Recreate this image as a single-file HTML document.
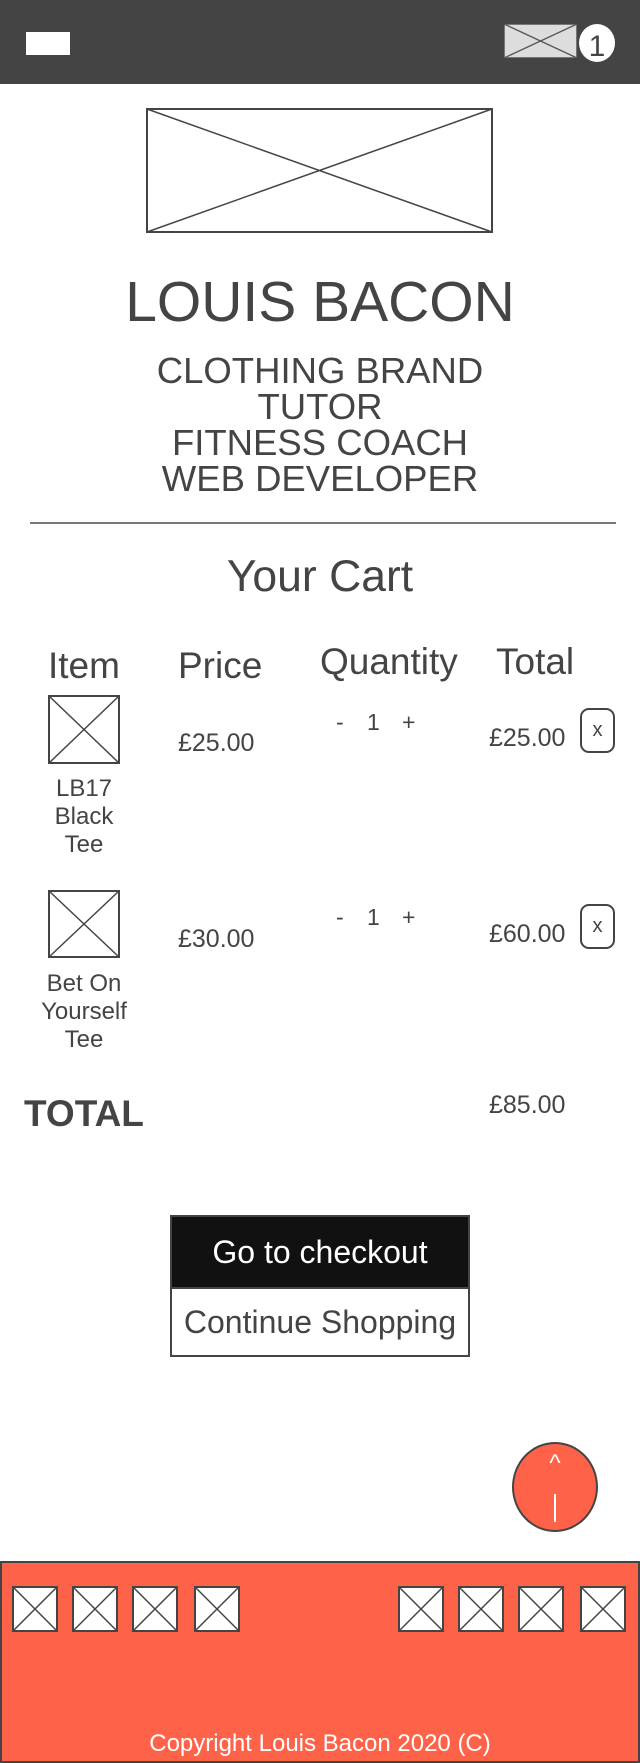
<!DOCTYPE html>
<html><head><meta charset="utf-8"><style>
*{margin:0;padding:0;box-sizing:border-box}
body{width:640px;height:1762px;position:relative;background:#fff;font-family:"Liberation Sans",sans-serif;color:#444;overflow:hidden}
.a{position:absolute;line-height:1;white-space:nowrap}
.c{text-align:center}
svg{position:absolute;display:block}
.btn{position:absolute;display:flex;align-items:center;justify-content:center;font-size:32px}
</style></head><body>
<div style="position:absolute;left:0;top:0;width:640px;height:84px;background:#444"></div>
<div style="position:absolute;left:26px;top:32px;width:44px;height:23px;background:#fff"></div>
<svg style="left:504px;top:24px" width="73" height="34"><rect x="0.5" y="0.5" width="72" height="33" fill="#ddd" stroke="#777"/><path d="M0 0L73 34M73 0L0 34" stroke="#555" stroke-width="1.3"/></svg>
<div style="position:absolute;left:579px;top:24px;width:36px;height:38px;border-radius:50%;background:#fff"></div>
<div class="a c" style="left:579px;top:32px;width:36px;font-size:30px;color:#444">1</div>

<svg style="left:146px;top:108px" width="347" height="125"><rect x="1" y="1" width="345" height="123" fill="#fff" stroke="#444" stroke-width="2"/><path d="M1 1L346 124M346 1L1 124" stroke="#444" stroke-width="1.5"/></svg>

<div class="a c" style="left:0;top:274px;width:640px;font-size:57px">LOUIS BACON</div>
<div class="a c" style="left:0;top:353px;width:640px;font-size:36.5px;line-height:36px">CLOTHING BRAND<br>TUTOR<br>FITNESS COACH<br>WEB DEVELOPER</div>
<div style="position:absolute;left:30px;top:522px;width:586px;height:2px;background:#777"></div>
<div class="a c" style="left:0;top:555px;width:640px;font-size:44.5px">Your Cart</div>

<div class="a" style="left:48px;top:647px;font-size:37px">Item</div>
<div class="a" style="left:178px;top:647px;font-size:37px">Price</div>
<div class="a" style="left:320px;top:643px;font-size:37px">Quantity</div>
<div class="a" style="left:496px;top:643px;font-size:37px">Total</div>

<svg style="left:48px;top:695px" width="72" height="69"><rect x="1" y="1" width="70" height="67" fill="#fff" stroke="#444" stroke-width="2"/><path d="M1 1L71 68M71 1L1 68" stroke="#444" stroke-width="1.5"/></svg>
<div class="a c" style="left:24px;top:775px;width:120px;font-size:24px;line-height:28px">LB17<br>Black<br>Tee</div>
<div class="a" style="left:178px;top:731px;font-size:25px">£25.00</div>
<div class="a" style="left:336px;top:711px;font-size:23px">-</div>
<div class="a" style="left:367px;top:711px;font-size:23px">1</div>
<div class="a" style="left:402px;top:711px;font-size:23px">+</div>
<div class="a" style="left:489px;top:726px;font-size:25px">£25.00</div>
<div class="btn" style="left:580px;top:708px;width:35px;height:45px;border:2px solid #444;border-radius:9px;font-size:20px">x</div>

<svg style="left:48px;top:890px" width="72" height="68"><rect x="1" y="1" width="70" height="66" fill="#fff" stroke="#444" stroke-width="2"/><path d="M1 1L71 67M71 1L1 67" stroke="#444" stroke-width="1.5"/></svg>
<div class="a c" style="left:24px;top:970px;width:120px;font-size:24px;line-height:28px">Bet On<br>Yourself<br>Tee</div>
<div class="a" style="left:178px;top:927px;font-size:25px">£30.00</div>
<div class="a" style="left:336px;top:906px;font-size:23px">-</div>
<div class="a" style="left:367px;top:906px;font-size:23px">1</div>
<div class="a" style="left:402px;top:906px;font-size:23px">+</div>
<div class="a" style="left:489px;top:922px;font-size:25px">£60.00</div>
<div class="btn" style="left:580px;top:904px;width:35px;height:45px;border:2px solid #444;border-radius:9px;font-size:20px">x</div>

<div class="a" style="left:24px;top:1095px;font-size:37px;font-weight:bold">TOTAL</div>
<div class="a" style="left:489px;top:1093px;font-size:25px">£85.00</div>

<div class="btn" style="left:170px;top:1215px;width:300px;height:74px;background:#111;border:2px solid #444;color:#fff">Go to checkout</div>
<div class="btn" style="left:170px;top:1287px;width:300px;height:70px;background:#fff;border:2px solid #444">Continue Shopping</div>

<div style="position:absolute;left:512px;top:1442px;width:86px;height:90px;border-radius:50%;background:#fe6349;border:2px solid #444"></div>
<div class="a c" style="left:512px;top:1452px;width:86px;font-size:24px;color:#fff">^</div>
<div style="position:absolute;left:554px;top:1494px;width:2px;height:28px;background:#fff"></div>

<div style="position:absolute;left:0;top:1561px;width:640px;height:202px;background:#fe6349;border:2px solid #444"></div>
<svg style="left:0;top:1586px" width="640" height="46">
<g fill="#fff" stroke="#444" stroke-width="2">
<rect x="13" y="1" width="44" height="44"/><rect x="73" y="1" width="44" height="44"/><rect x="133" y="1" width="44" height="44"/><rect x="195" y="1" width="44" height="44"/>
<rect x="399" y="1" width="44" height="44"/><rect x="459" y="1" width="44" height="44"/><rect x="519" y="1" width="44" height="44"/><rect x="581" y="1" width="44" height="44"/>
</g>
<path stroke="#444" stroke-width="1.5" d="M13 1l44 44M57 1L13 45M73 1l44 44M117 1L73 45M133 1l44 44M177 1l-44 44M195 1l44 44M239 1l-44 44M399 1l44 44M443 1l-44 44M459 1l44 44M503 1l-44 44M519 1l44 44M563 1l-44 44M581 1l44 44M625 1l-44 44"/>
</svg>
<div class="a c" style="left:0;top:1732px;width:640px;font-size:24px;color:#fff">Copyright Louis Bacon 2020 (C)</div>
</body></html>
